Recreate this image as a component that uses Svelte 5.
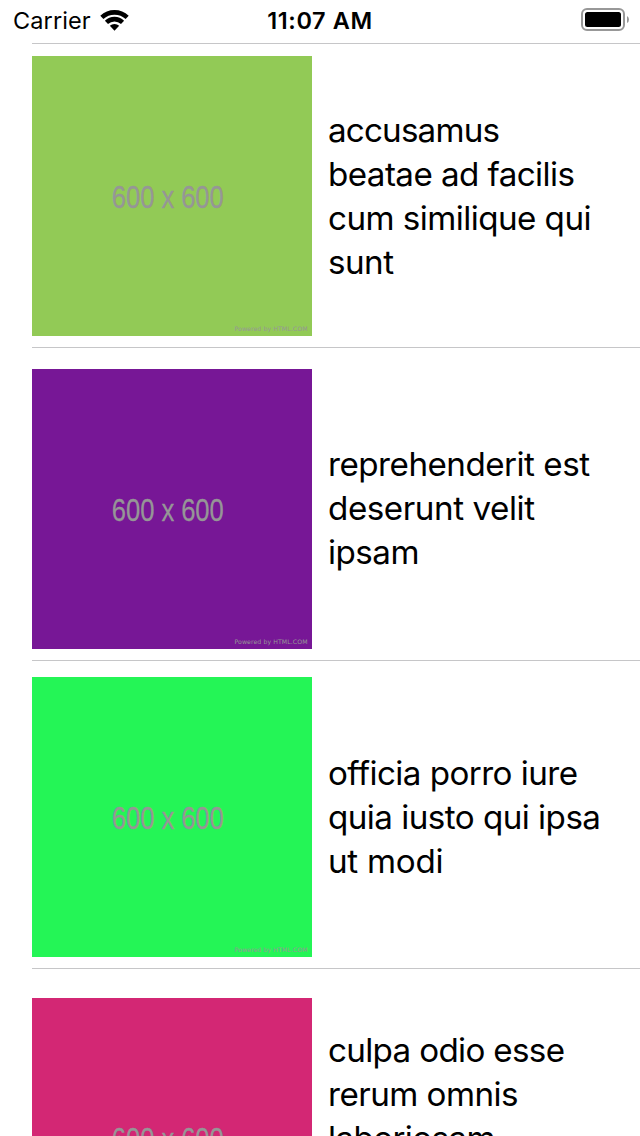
<script>
  const rows = [
    { color: '#92ca56', height: 304, imageTop: 12, textTop: 64, lines: [['accusamus', 172], ['beatae ad facilis', 247], ['cum similique qui', 263.5], ['sunt', 66]] },
    { color: '#771796', height: 313, imageTop: 21, textTop: 94, lines: [['reprehenderit est', 262], ['deserunt velit', 207], ['ipsam', 91.5]] },
    { color: '#24f556', height: 308, imageTop: 16, textTop: 90, lines: [['officia porro iure', 250], ['quia iusto qui ipsa', 273], ['ut modi', 115.5]] },
    { color: '#d32774', height: 313, imageTop: 29, textTop: 59, lines: [['culpa odio esse', 237], ['rerum omnis', 190.5], ['laboriosam', 167.5]] }
  ];
</script>

<div class="screen">
  <header>
    <div class="carrier">
      <span>Carrier</span>
      <svg class="wifi" width="30" height="23" viewBox="0 0 30 23">
        <path d="M0.3 6.8A20.6 20.6 0 0 1 28.7 6.8L25.6 10.1A16.3 16.3 0 0 0 3.4 10.1Z" />
        <path d="M4.9 11.7A13.8 13.8 0 0 1 24.1 11.7L21 15A9.7 9.7 0 0 0 8 15Z" />
        <path d="M9.8 16.8A7 7 0 0 1 19.2 16.8L14.5 21.8Z" />
      </svg>
    </div>
    <div class="time">11:07 AM</div>
    <svg class="battery" width="50" height="24" viewBox="0 0 50 24">
      <rect x="2" y="1" width="42" height="21" rx="5" fill="none" stroke="#989898" stroke-width="2" />
      <rect x="5" y="4" width="36" height="15" rx="2.5" />
      <path d="M47 8Q49 9 49 11.5T47 15Z" fill="#989898" />
    </svg>
  </header>
  <main>
    {#each rows as row}
      <article style="height:{row.height}px">
        <svg class="thumb" style="margin-top:{row.imageTop}px" width="280" height="280" viewBox="0 0 280 280">
          <rect width="280" height="280" fill={row.color} />
          <text class="size" transform="translate(79.8 152) scale(.8 1)" textLength="140" lengthAdjust="spacing">600 x 600</text>
          <text class="credit" x="202.5" y="275.3" textLength="73" lengthAdjust="spacing">Powered by HTML.COM</text>
        </svg>
        <div class="title" style="padding-top:{row.textTop}px">
          {#each row.lines as [line, width]}
            <svg class="line" width="300" height="44"><text x="0" y="34" textLength={width} lengthAdjust="spacing">{line}</text></svg>
          {/each}
        </div>
      </article>
    {/each}
  </main>
</div>

<style>
  .screen { width: 640px; height: 1136px; overflow: hidden; background: #fff; color: #000; font-family: Inter, sans-serif; }
  header { height: 43px; display: grid; grid-template-columns: 1fr auto 1fr; box-sizing: border-box; }
  .carrier { display: flex; padding-left: 13px; font-size: 23.5px; line-height: 41px; letter-spacing: .1px; }
  .carrier span { width: 77px; }
  .wifi { margin: 9px 0 0 10px; }
  .time { font-size: 23.5px; font-weight: 600; line-height: 41px; letter-spacing: .6px; }
  .battery { justify-self: end; margin: 8px 10px 0 0; }
  article { display: flex; margin-left: 32px; border-top: 1px solid #c6c6c8; box-sizing: border-box; }
  .thumb { flex: none; display: block; }
  .size { font: 32px "Liberation Sans", sans-serif; fill: #969696; stroke: #969696; stroke-width: .3px; }
  .credit { font: 6.2px "DejaVu Sans", sans-serif; fill: #969696; }
  .title { box-sizing: border-box; margin-left: 16px; }
  .line { display: block; overflow: visible; }
  .line text { font: 33.2px Inter, sans-serif; }
</style>
